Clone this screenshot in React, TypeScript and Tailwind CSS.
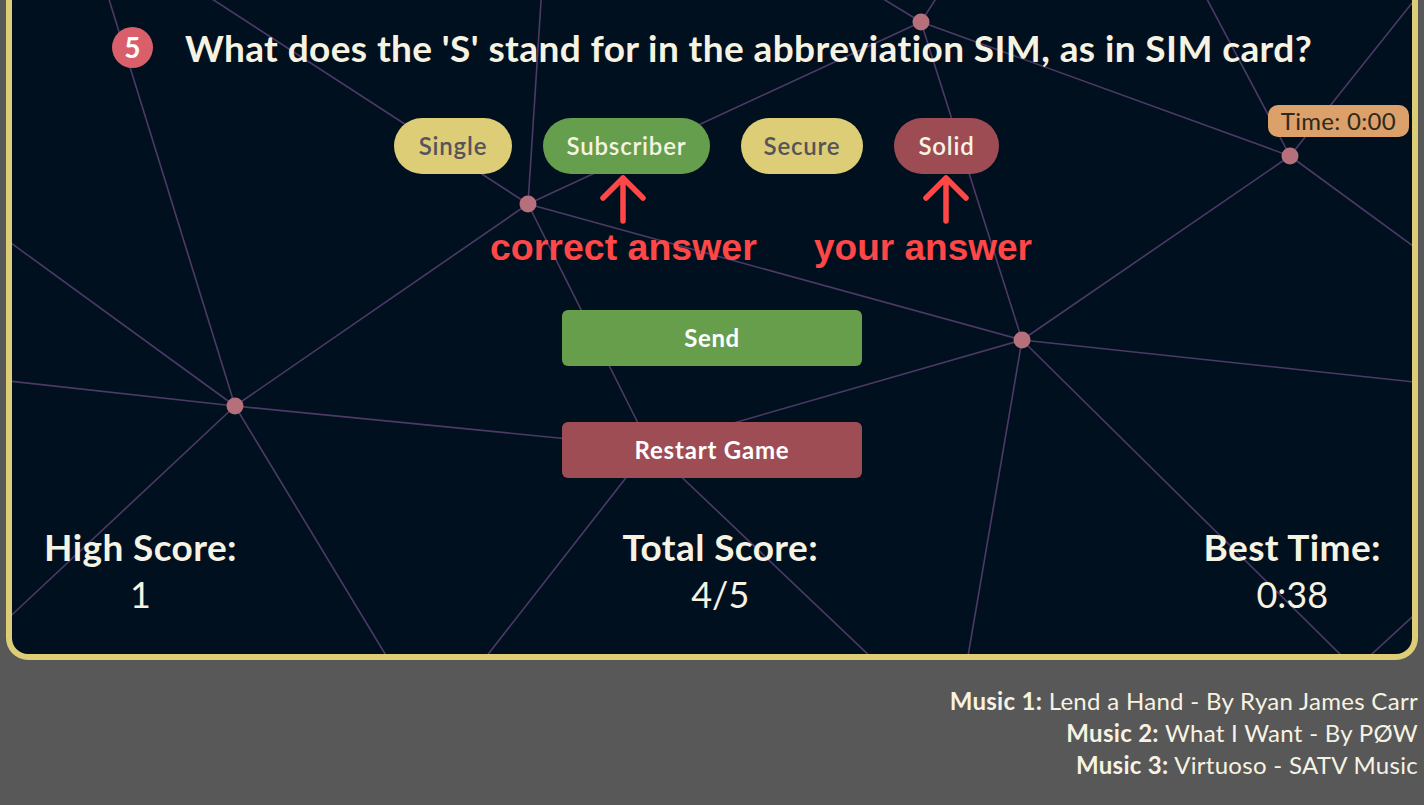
import React from "react";

const nodes: [number, number][] = [
  [921, 22],
  [528, 204],
  [1290, 156],
  [1022, 340],
  [235, 406],
];

const lines: [number, number, number, number][] = [
  [103, -20, 235, 406],
  [192, -14, 528, 204],
  [542, -14, 528, 204],
  [528, 204, 921, 22],
  [528, 204, 1022, 340],
  [528, 204, 650, 447],
  [528, 204, 235, 406],
  [862, -14, 921, 22],
  [944, -14, 921, 22],
  [921, 22, 1290, 156],
  [921, 22, 1022, 340],
  [1200, -14, 1290, 156],
  [1424, -12, 1290, 156],
  [1290, 156, 1424, 254],
  [1290, 156, 1022, 340],
  [1022, 340, 1424, 383],
  [1022, 340, 650, 447],
  [1022, 340, 967, 662],
  [1022, 340, 1348, 662],
  [1360, 665, 1424, 606],
  [235, 406, 0, 235],
  [235, 406, 0, 380],
  [235, 406, 0, 626],
  [235, 406, 390, 662],
  [235, 406, 650, 447],
  [650, 447, 482, 662],
  [650, 447, 876, 662],
];

function Network() {
  return (
    <svg className="absolute inset-0 h-full w-full" viewBox="0 0 1400 668" preserveAspectRatio="none">
      <g transform="translate(-12,14)">
        {lines.map((l, i) => (
          <line key={i} x1={l[0]} y1={l[1]} x2={l[2]} y2={l[3]} stroke="#4c3a66" strokeWidth="1.6" />
        ))}
        {nodes.map((n, i) => (
          <circle key={i} cx={n[0]} cy={n[1]} r="8.5" fill="#b5707b" />
        ))}
      </g>
    </svg>
  );
}

function Arrow({ left, top }: { left: number; top: number }) {
  return (
    <svg className="absolute" style={{ left, top }} width="48" height="50" viewBox="0 0 48 50">
      <path d="M24 47 V4 M4 24 L24 4 L44 24" stroke="#ff4747" strokeWidth="5.5" fill="none" strokeLinecap="round" strokeLinejoin="round" />
    </svg>
  );
}

export default function App() {
  return (
    <div className="h-[805px] w-full overflow-hidden bg-[#585858] font-['Lato',sans-serif]">
      <div className="relative mx-[6px] -mt-[20px] h-[680px] overflow-hidden rounded-[22px] border-[6px] border-[#dccd76] bg-[#01101f]">
        <Network />
        <div className="relative flex flex-col items-center">
          <div className="mt-[39px] flex h-[44px] items-center justify-center gap-[32px]">
            <div className="flex h-[41px] w-[41px] items-center justify-center rounded-full bg-[#d9606a] text-[28px] font-bold text-white">
              5
            </div>
            <div className="text-[37px] font-bold leading-none tracking-[0.4px] text-[#f7f3e2]">
              What does the 'S' stand for in the abbreviation SIM, as in SIM card?
            </div>
          </div>

          <div className="mt-[49px] flex h-[56px] items-center justify-center gap-[31px] pr-[31px]">
            <div className="flex h-[56px] w-[118px] items-center justify-center rounded-[28px] bg-[#dccd76] text-[24px] font-semibold tracking-[0.8px] text-[#56545a]">
              Single
            </div>
            <div className="flex h-[56px] w-[167px] items-center justify-center rounded-[28px] bg-[#659e4c] text-[24px] font-semibold tracking-[0.8px] text-[#f7f3e2]">
              Subscriber
            </div>
            <div className="flex h-[56px] w-[122px] items-center justify-center rounded-[28px] bg-[#dccd76] text-[24px] font-semibold tracking-[0.8px] text-[#56545a]">
              Secure
            </div>
            <div className="flex h-[56px] w-[105px] items-center justify-center rounded-[28px] bg-[#9e4c54] text-[24px] font-semibold tracking-[0.8px] text-[#f7f3e2]">
              Solid
            </div>
          </div>

          <button className="mt-[136px] flex h-[56px] w-[300px] items-center justify-center rounded-[6px] bg-[#669e4c] text-[24px] font-bold tracking-[0.6px] text-white">
            Send
          </button>
          <button className="mt-[56px] flex h-[56px] w-[300px] items-center justify-center rounded-[6px] bg-[#9f4d55] text-[24px] font-bold tracking-[0.8px] text-white">
            Restart Game
          </button>

          <div className="mt-[47px] flex w-full justify-between pl-[32px] pr-[31px] text-[#f7f3e2]">
            <div className="flex flex-col items-center">
              <div className="text-[37px] font-bold leading-[44px] tracking-[0.4px]">High Score:</div>
              <div className="text-[36px] leading-[50px]">1</div>
            </div>
            <div className="flex flex-col items-center">
              <div className="text-[37px] font-bold leading-[44px] tracking-[0.4px]">Total Score:</div>
              <div className="text-[36px] leading-[50px]">4/5</div>
            </div>
            <div className="flex flex-col items-center">
              <div className="text-[37px] font-bold leading-[44px] tracking-[0.4px]">Best Time:</div>
              <div className="text-[36px] leading-[50px]">0:38</div>
            </div>
          </div>
        </div>

        <div className="absolute right-[3px] top-[119px] flex h-[32px] items-center rounded-[10px] bg-[#dca06b] px-[13px] text-[24px] tracking-[0.3px] text-[#2d2a1b]">
          Time: 0:00
        </div>

        <Arrow left={587} top={188} />
        <Arrow left={910} top={188} />
        <div className="absolute left-[478px] top-[243px] font-['Liberation_Sans',Arial,sans-serif] text-[37.5px] font-bold leading-none text-[#ff4747]">
          correct answer
        </div>
        <div className="absolute left-[802px] top-[243px] font-['Liberation_Sans',Arial,sans-serif] text-[37px] font-bold leading-none text-[#ff4747]">
          your answer
        </div>
      </div>

      <div className="mt-[25px] flex flex-col items-end pr-[6px] text-[24px] leading-[32px] tracking-[0.3px] text-[#f7f3e2]">
        <div>
          <span className="font-bold">Music 1:</span> Lend a Hand - By Ryan James Carr
        </div>
        <div>
          <span className="font-bold">Music 2:</span> What I Want - By PØW
        </div>
        <div>
          <span className="font-bold">Music 3:</span> Virtuoso - SATV Music
        </div>
      </div>
    </div>
  );
}
